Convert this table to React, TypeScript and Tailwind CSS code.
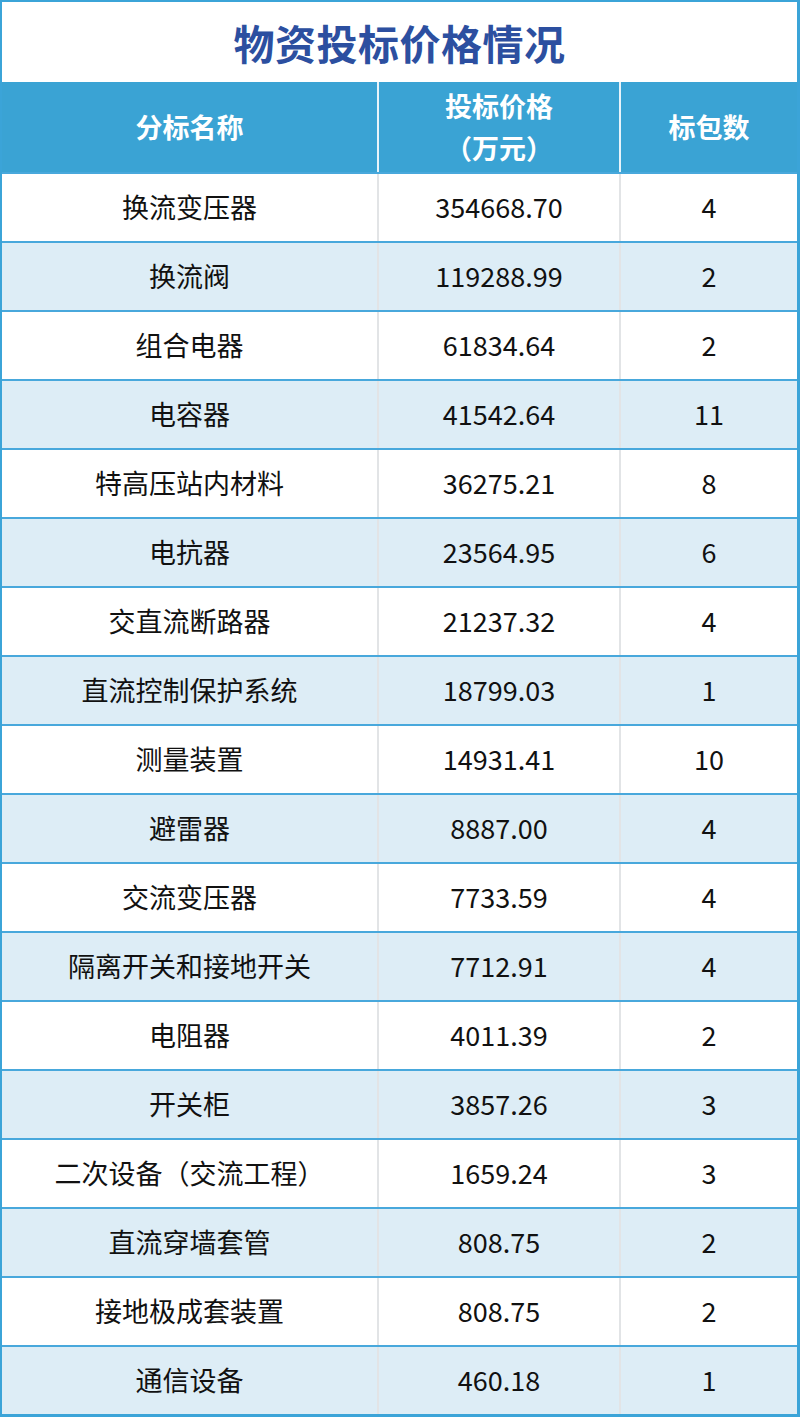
const rows: [string, string, string][] = [
  ["换流变压器", "354668.70", "4"],
  ["换流阀", "119288.99", "2"],
  ["组合电器", "61834.64", "2"],
  ["电容器", "41542.64", "11"],
  ["特高压站内材料", "36275.21", "8"],
  ["电抗器", "23564.95", "6"],
  ["交直流断路器", "21237.32", "4"],
  ["直流控制保护系统", "18799.03", "1"],
  ["测量装置", "14931.41", "10"],
  ["避雷器", "8887.00", "4"],
  ["交流变压器", "7733.59", "4"],
  ["隔离开关和接地开关", "7712.91", "4"],
  ["电阻器", "4011.39", "2"],
  ["开关柜", "3857.26", "3"],
  ["二次设备（交流工程）", "1659.24", "3"],
  ["直流穿墙套管", "808.75", "2"],
  ["接地极成套装置", "808.75", "2"],
  ["通信设备", "460.18", "1"],
];

export default function App() {
  return (
    <div
      className="w-[800px] h-[1417px] bg-white border-2 border-r-[3px] border-b-[3px] border-[#3ba4d8] flex flex-col"
      style={{ fontFamily: '"Noto Sans CJK SC", "Noto Sans", sans-serif' }}
    >
      <div className="h-[80px] flex items-center justify-center text-[41px] font-bold text-[#2c4fa0] leading-none tracking-[0.5px]">
        物资投标价格情况
      </div>
      <div className="h-[90px] flex bg-[#3aa3d4] text-white font-bold text-[27px]">
        <div className="w-[377px] border-r-2 border-[#e8f3fa] flex items-center justify-center">
          分标名称
        </div>
        <div className="w-[242px] border-r-2 border-[#e8f3fa] flex flex-col items-center justify-center leading-[42px]">
          <span>投标价格</span>
          <span>（万元）</span>
        </div>
        <div className="flex-1 flex items-center justify-center">标包数</div>
      </div>
      {rows.map(([name, price, count], i) => (
        <div
          key={name + i}
          className={`h-[69px] flex border-t-2 border-[#48a8dc] text-[27px] text-[#111] ${
            i % 2 === 1 ? "bg-[#ddedf6]" : "bg-white"
          }`}
        >
          <div className="w-[377px] border-r-2 border-[#e2e4e6] flex items-center justify-center">
            {name}
          </div>
          <div className="w-[242px] border-r-2 border-[#e2e4e6] flex items-center justify-center">
            {price}
          </div>
          <div className="flex-1 flex items-center justify-center">{count}</div>
        </div>
      ))}
    </div>
  );
}
